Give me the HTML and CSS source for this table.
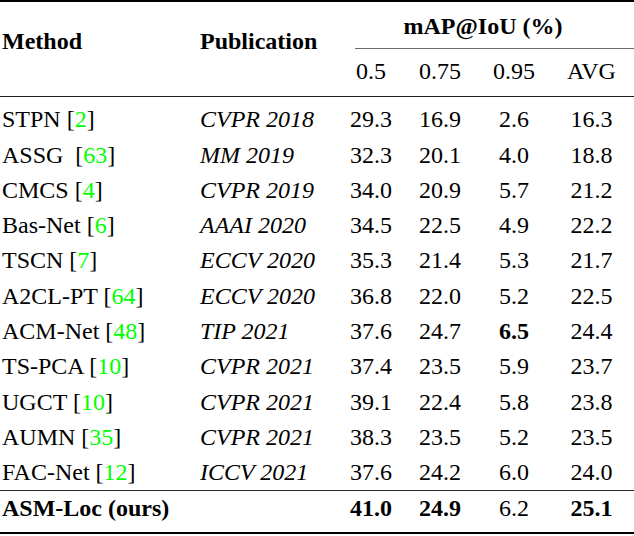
FILE: index.html
```html
<!DOCTYPE html>
<html>
<head>
<meta charset="utf-8">
<link rel="stylesheet" href="styles.css">
</head>
<body>
<div class="tbl">
  <div class="rule thick r1"></div>
  <div class="hd method">Method</div>
  <div class="hd pub">Publication</div>
  <div class="hd group">mAP@IoU (%)</div>
  <div class="cmid"></div>
  <div class="sub">0.5</div><div class="sub">0.75</div><div class="sub">0.95</div><div class="sub">AVG</div>
  <div class="rule mid"></div>

  <div class="c m">STPN [<span class="cite">2</span>]</div><div class="c p">CVPR 2018</div><div class="c n">29.3</div><div class="c n">16.9</div><div class="c n">2.6</div><div class="c n">16.3</div>
  <div class="c m">ASSG&nbsp; [<span class="cite">63</span>]</div><div class="c p">MM 2019</div><div class="c n">32.3</div><div class="c n">20.1</div><div class="c n">4.0</div><div class="c n">18.8</div>
  <div class="c m">CMCS [<span class="cite">4</span>]</div><div class="c p">CVPR 2019</div><div class="c n">34.0</div><div class="c n">20.9</div><div class="c n">5.7</div><div class="c n">21.2</div>
  <div class="c m">Bas-Net [<span class="cite">6</span>]</div><div class="c p">AAAI 2020</div><div class="c n">34.5</div><div class="c n">22.5</div><div class="c n">4.9</div><div class="c n">22.2</div>
  <div class="c m">TSCN [<span class="cite">7</span>]</div><div class="c p">ECCV 2020</div><div class="c n">35.3</div><div class="c n">21.4</div><div class="c n">5.3</div><div class="c n">21.7</div>
  <div class="c m">A2CL-PT [<span class="cite">64</span>]</div><div class="c p">ECCV 2020</div><div class="c n">36.8</div><div class="c n">22.0</div><div class="c n">5.2</div><div class="c n">22.5</div>
  <div class="c m">ACM-Net [<span class="cite">48</span>]</div><div class="c p">TIP 2021</div><div class="c n">37.6</div><div class="c n">24.7</div><div class="c n b">6.5</div><div class="c n">24.4</div>
  <div class="c m">TS-PCA [<span class="cite">10</span>]</div><div class="c p">CVPR 2021</div><div class="c n">37.4</div><div class="c n">23.5</div><div class="c n">5.9</div><div class="c n">23.7</div>
  <div class="c m">UGCT [<span class="cite">10</span>]</div><div class="c p">CVPR 2021</div><div class="c n">39.1</div><div class="c n">22.4</div><div class="c n">5.8</div><div class="c n">23.8</div>
  <div class="c m">AUMN [<span class="cite">35</span>]</div><div class="c p">CVPR 2021</div><div class="c n">38.3</div><div class="c n">23.5</div><div class="c n">5.2</div><div class="c n">23.5</div>
  <div class="c m">FAC-Net [<span class="cite">12</span>]</div><div class="c p">ICCV 2021</div><div class="c n">37.6</div><div class="c n">24.2</div><div class="c n">6.0</div><div class="c n">24.0</div>

  <div class="rule thin"></div>

  <div class="c m b">ASM-Loc (ours)</div><div class="c p"></div><div class="c n b">41.0</div><div class="c n b">24.9</div><div class="c n">6.2</div><div class="c n b">25.1</div>

  <div class="rule thick bottom"></div>
</div>
</body>
</html>
```
FILE: styles.css
```css
html, body {
  margin: 0;
  padding: 0;
  background: #ffffff;
}

body {
  font-family: "Liberation Serif", "Times New Roman", serif;
  font-size: 24px;
  color: #000000;
  width: 634px;
  height: 536px;
  overflow: hidden;
}

.tbl {
  display: grid;
  grid-template-columns: 187px 154px 60px 78px 70px 85px;
  width: 634px;
}

.rule {
  grid-column: 1 / -1;
}

.rule.thick {
  height: 2px;
  background: #000000;
}

.r1 {
  grid-row: 1;
}

.rule.mid {
  grid-row: 5;
  height: 1px;
  background: #1e1e1e;
  margin-bottom: 5.25px;
}

.rule.thin {
  height: 1px;
  background: #2a2a2a;
}

.rule.bottom {
  margin-top: 5.2px;
}

.hd {
  font-weight: bold;
  line-height: 27px;
}

.method {
  grid-column: 1;
  grid-row: 2 / span 3;
  padding-left: 2px;
  margin-top: 25.7px;
}

.pub {
  grid-column: 2;
  grid-row: 2 / span 3;
  padding-left: 13px;
  margin-top: 25.7px;
}

.group {
  grid-column: 3 / 7;
  grid-row: 2;
  text-align: center;
  padding: 11.4px 9px 7.6px 0;
}

.cmid {
  grid-column: 3 / 7;
  grid-row: 3;
  height: 1px;
  margin-left: 14px;
  background: #6a6a6a;
}

.sub {
  grid-row: 4;
  text-align: center;
  line-height: 27px;
  padding: 9.4px 0 10.6px;
}

.c {
  line-height: 35.3px;
  white-space: nowrap;
}

.m {
  padding-left: 2px;
}

.p {
  font-style: italic;
  padding-left: 13px;
}

.n {
  text-align: center;
}

.b {
  font-weight: bold;
}

.cite {
  color: #00ff00;
}
```
